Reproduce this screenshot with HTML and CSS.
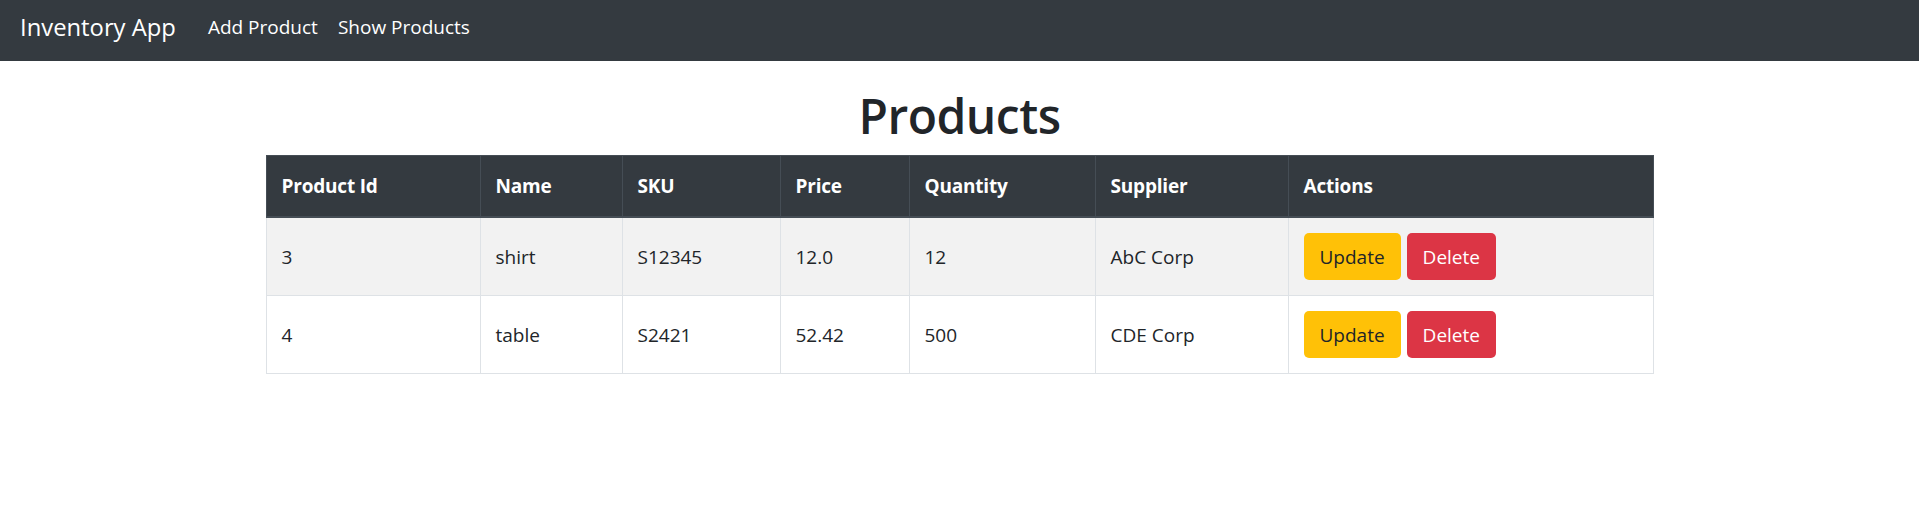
FILE: index.html
```html
<!DOCTYPE html>
<html lang="en">
<head>
<meta charset="utf-8">
<title>Inventory App</title>
<link rel="stylesheet" href="styles.css">
</head>
<body>
<nav class="navbar">
  <a class="brand" href="#">Inventory App</a>
  <ul class="nav">
    <li><a class="nav-link" href="#">Add Product</a></li>
    <li><a class="nav-link" href="#">Show Products</a></li>
  </ul>
</nav>
<main class="container">
  <h1 class="title">Products</h1>
  <table class="table">
    <colgroup>
      <col class="c-id"><col class="c-name"><col class="c-sku"><col class="c-price"><col class="c-qty"><col class="c-sup"><col class="c-act">
    </colgroup>
    <thead>
      <tr>
        <th>Product Id</th><th>Name</th><th>SKU</th><th>Price</th><th>Quantity</th><th>Supplier</th><th>Actions</th>
      </tr>
    </thead>
    <tbody>
      <tr class="striped">
        <td>3</td><td>shirt</td><td>S12345</td><td>12.0</td><td>12</td><td>AbC Corp</td>
        <td><div class="actions"><button class="btn btn-warning">Update</button><button class="btn btn-danger">Delete</button></div></td>
      </tr>
      <tr>
        <td>4</td><td>table</td><td>S2421</td><td>52.42</td><td>500</td><td>CDE Corp</td>
        <td><div class="actions"><button class="btn btn-warning">Update</button><button class="btn btn-danger">Delete</button></div></td>
      </tr>
    </tbody>
  </table>
</main>
</body>
</html>
```
FILE: styles.css
```css
* { box-sizing: border-box; }
body {
  margin: 0;
  font-family: "Open Sans", "Noto Sans", sans-serif;
  font-size: 19px;
  line-height: 30px;
  color: #212529;
  background: #fff;
}
.navbar {
  height: 61px;
  background: #343a40;
  display: flex;
  align-items: center;
  padding: 0 20px 7px;
}
.brand {
  color: #fff;
  text-decoration: none;
  font-size: 23.8px;
  line-height: 37px;
  margin-right: 22px;
}
.nav {
  list-style: none;
  margin: 0;
  padding: 0;
  display: flex;
}
.nav-link {
  display: block;
  color: #fff;
  text-decoration: none;
  font-size: 19px;
  padding: 0 10px;
}
.container {
  width: 1388px;
  margin: 0 auto;
}
.title {
  margin: 25px 0 9px;
  text-align: center;
  font-size: 48px;
  line-height: 60px;
  font-weight: 600;
  letter-spacing: -0.5px;
}
.table {
  width: 100%;
  border-collapse: collapse;
  table-layout: fixed;
}
.c-id { width: 214px; }
.c-name { width: 142px; }
.c-sku { width: 158px; }
.c-price { width: 129px; }
.c-qty { width: 186px; }
.c-sup { width: 193px; }
.table th, .table td {
  padding: 15px;
  text-align: left;
  vertical-align: middle;
  border: 1px solid #dee2e6;
}
.table th {
  background: #343a40;
  color: #fff;
  border-color: #454d55;
  border-bottom: 2px solid #454d55;
  font-weight: 700;
  letter-spacing: -0.2px;
}
.striped td { background: #f2f2f2; }
.actions {
  display: flex;
  gap: 6px;
}
.btn {
  font-family: inherit;
  font-size: 19px;
  line-height: 30px;
  padding: 7.5px 15px;
  border: 1px solid transparent;
  border-radius: 5px;
}
.btn-warning { background: #ffc107; color: #212529; }
.btn-danger { background: #dc3545; color: #fff; }
```
